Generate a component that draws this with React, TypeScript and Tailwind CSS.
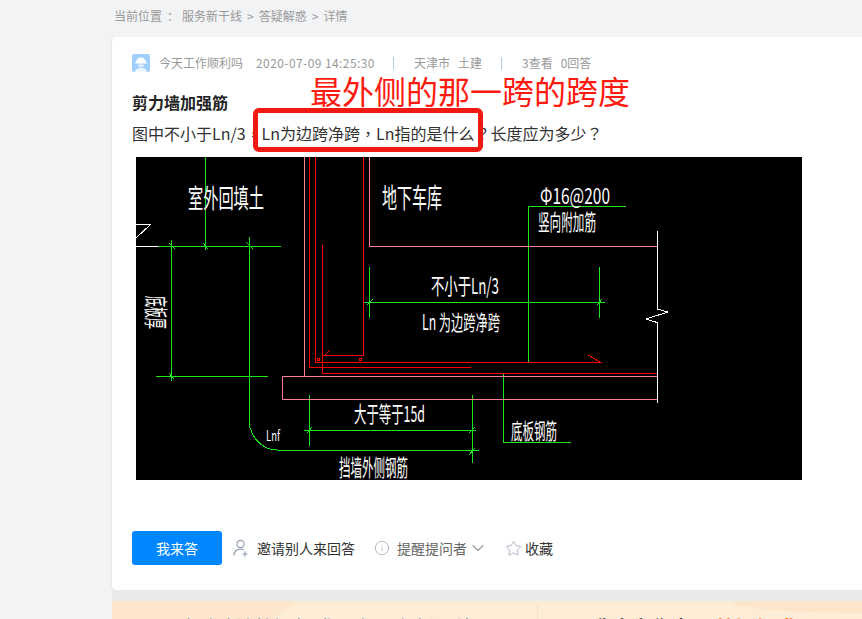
import { ChevronDown, Info, Star } from 'lucide-react';

const FONT = '"Noto Sans CJK SC", sans-serif';

// CAD 도면 안의 글자
const cadTexts = [
  { text: '室外回填土', x: 188, y: 208, w: 76, size: 26 },
  { text: '地下车库', x: 382, y: 208, w: 60, size: 27 },
  { text: 'Φ16@200', x: 540, y: 204, w: 70, size: 22 },
  { text: '竖向附加筋', x: 538, y: 230, w: 58, size: 22 },
  { text: '不小于Ln/3', x: 431, y: 294, w: 68, size: 22 },
  { text: 'Ln 为边跨净跨', x: 422, y: 330, w: 78, size: 21 },
  { text: '大于等于15d', x: 354, y: 422, w: 71, size: 22 },
  { text: '挡墙外侧钢筋', x: 339, y: 476, w: 69, size: 23 },
  { text: '底板钢筋', x: 511, y: 439, w: 46, size: 22 },
  { text: 'Lnf', x: 266, y: 441, w: 14, size: 14 },
];

const lines = {
  green: [
    'M205 157V250', 'M158 246H281', 'M171.5 240V381', 'M156 376H268',
    'M249 237V423C251 436 261 450 277 450H479', 'M528 206V362', 'M528 206H626',
    'M369 267V318', 'M364 302H605', 'M599 267V318', 'M309 395V446', 'M304 430H476',
    'M472 395V463', 'M503 374V442H571',
    // 치수선 눈금
    'M169 243L175 249', 'M203 243L208 249', 'M246 242L253 249', 'M367 305L373 299',
    'M597 305L602 299', 'M307 433L312 427', 'M469 433L475 427', 'M469 455L475 448', 'M169 373L174 379',
  ],
  pink: ['M304 157V376', 'M369 157V246H657', 'M282 376H657V399H282Z'],
  red: [
    'M309 157V367', 'M315 157V362', 'M322 245V373', 'M363 157V355H323',
    'M315 362H600L588 355', 'M309 367H471', 'M322 373H657', 'M325 355L330 350',
    'M317 358H319V360H317Z', 'M359 358H361V360H359Z',
  ],
  white: ['M136 246H158', 'M136 224H151L136 238', 'M657 231V309L668 312L646 319L657 322.5V403'],
};

const CadDrawing = () => (
  <svg viewBox="136 157 666 323" className="mt-[12px] ml-1 block h-[323px] w-[666px] bg-black" shapeRendering="crispEdges">
    <g fill="none" strokeWidth="1">
      {lines.green.map((d) => <path key={d} d={d} stroke="#1de51d" />)}
      {lines.pink.map((d) => <path key={d} d={d} stroke="#ff8096" />)}
      {lines.red.map((d) => <path key={d} d={d} stroke="#f00" />)}
      {lines.white.map((d) => <path key={d} d={d} stroke="#fff" />)}
    </g>
    <g fill="#fff" style={{ fontFamily: FONT }}>
      {cadTexts.map((t) => (
        <text key={t.text} x={t.x} y={t.y} fontSize={t.size} textLength={t.w} lengthAdjust="spacingAndGlyphs">
          {t.text}
        </text>
      ))}
      <text x="0" y="0" fontSize="24" textLength="33" lengthAdjust="spacingAndGlyphs" transform="translate(147 296) rotate(90)">
        底板厚
      </text>
    </g>
  </svg>
);

const Avatar = () => (
  <svg viewBox="0 0 18 18" className="h-[18px] w-[18px]">
    <rect width="18" height="18" rx="2" fill="#9fd0fc" />
    <path d="M4 8.5a5 5 0 0 1 10 0h1v1H3v-1z" fill="#fff" />
    <path d="M6 10.5h6a3 3 0 0 1-6 0z" fill="#e3f1fe" />
    <path d="M3 18c0-3 3-4 6-4s6 1 6 4z" fill="#eef7ff" />
  </svg>
);

// 사람 + 작은 플러스 아이콘
const InviteIcon = () => (
  <svg viewBox="0 0 16 18" fill="none" stroke="#8d99ae" strokeWidth="1.1" className="ml-[11px] h-[18px] w-4">
    <circle cx="7.5" cy="5" r="3.6" />
    <path d="M1 16.5c0-4 2.8-6.5 6.5-6.5 1.2 0 2.3.3 3.2.8" />
    <path d="M12 12.5v5M9.5 15h5" />
  </svg>
);

export default function App() {
  return (
    <div className="relative h-[619px] w-[862px] overflow-hidden bg-[#f2f3f5] pl-[112px]" style={{ fontFamily: FONT }}>
      <div className="flex h-[37px] items-center pb-[6px] pl-[2px] text-xs text-[#999]">
        <span className="mr-[5px]">当前位置</span>
        <span className="mr-[3px]">：</span>
        <span>服务新干线</span>
        <span className="mx-[5px]">&gt;</span>
        <span>答疑解惑</span>
        <span className="mx-[5px]">&gt;</span>
        <span>详情</span>
      </div>

      <div className="h-[553px] w-[800px] rounded-sm bg-white pt-[17px] pl-5 shadow-sm">
        <div className="flex h-[18px] items-center text-xs text-[#999]">
          <Avatar />
          <span className="ml-[9px]">今天工作顺利吗</span>
          <span className="ml-[13px] tracking-[0.42px]">2020-07-09 14:25:30</span>
          <span className="ml-[18px] h-[13px] w-px bg-[#b5cbe0]" />
          <span className="ml-5">天津市</span>
          <span className="ml-2">土建</span>
          <span className="ml-[19px] h-[13px] w-px bg-[#b5cbe0]" />
          <span className="ml-5">3查看</span>
          <span className="ml-2">0回答</span>
        </div>

        <h1 className="mt-[18px] text-base leading-6 font-bold text-[#222]">剪力墙加强筋</h1>
        <p className="mt-[7px] font-['Noto_Sans_CJK_TC',sans-serif] text-base leading-6 text-[#333]">图中不小于Ln/3，Ln为边跨净跨，Ln指的是什么？长度应为多少？</p>

        <CadDrawing />

        <div className="mt-[51px] flex items-center text-sm">
          <button className="h-[34px] w-[90px] rounded-[3px] bg-[#0087ff] text-white">我来答</button>
          <InviteIcon />
          <span className="ml-2 text-[#333]">邀请别人来回答</span>
          <Info className="ml-[19px] h-4 w-4 text-[#8d99ae]" strokeWidth={1} />
          <span className="ml-[7px] text-[#666]">提醒提问者</span>
          <ChevronDown className="ml-[1px] h-5 w-5 text-[#999]" strokeWidth={1.4} />
          <Star className="ml-[17px] h-[17px] w-[17px] text-[#8d99ae]" strokeWidth={1} />
          <span className="ml-[3px] text-[#333]">收藏</span>
        </div>
      </div>

      <div className="h-[11px] w-[800px] bg-[#e9eaec]" />

      <div className="relative flex h-[40px] w-[800px] overflow-hidden bg-[linear-gradient(149deg,#fee6cc_0,#fee6cc_21.7%,#fdecd6_21.7%,#fdecd6_100%)] text-xl leading-7 font-bold text-[#333]">
        <div className="absolute top-[-12px] left-[618px] h-[24px] w-[260px] rounded-[50%] bg-[#fde5ca]" />
        <div className="relative mt-[2px] flex h-[38px] w-[426px] justify-center border-r border-[#f5dfc2] pt-[11px] font-normal text-[#777]">
          <span>随时随地答疑解惑尽在服务新干线</span>
        </div>
        <div className="relative ml-[54px] pt-[13px] whitespace-nowrap">
          <span>我来为你专属</span>
          <span className="ml-1 text-[#ff6a1a]">答疑解惑</span>
        </div>
      </div>

      {/* 스크린샷 위에 직접 그린 빨간 주석 */}
      <div className="absolute top-[68px] left-[310px] text-[32px] leading-[44px] whitespace-nowrap text-[#ff1a0f]">最外侧的那一跨的跨度</div>
      <div className="absolute top-[108px] left-[253px] h-[44px] w-[230px] rounded-md border-[5px] border-[#f01a12]" />
    </div>
  );
}
